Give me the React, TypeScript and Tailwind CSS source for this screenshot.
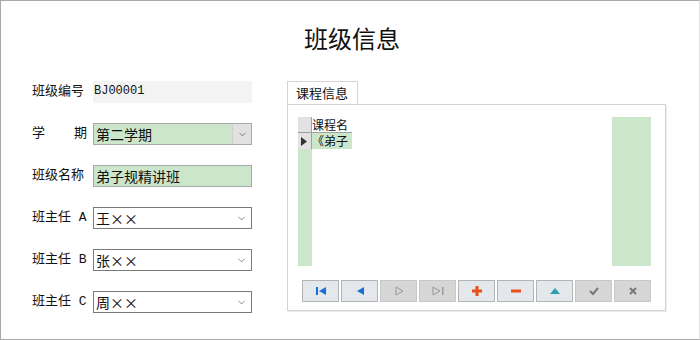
import { ChevronDown } from "lucide-react";

const cjk = { fontFamily: '"Noto Sans CJK SC", sans-serif' };
const mixed = { fontFamily: '"Liberation Mono", "Noto Sans CJK SC", monospace' };

const Label = ({ children }: { children: React.ReactNode }) => (
  <div className="w-[61px] shrink-0 text-[13px] text-[#111]" style={mixed}>
    {children}
  </div>
);

const Select = ({ value, green }: { value: string; green?: boolean }) => (
  <div
    className={`flex h-[22px] w-[159px] items-center border ${
      green ? "border-[#a8a8a8] bg-[#cce6cc]" : "border-[#7a7a7a] bg-white"
    }`}
  >
    <span className="flex-1 pl-[2px] text-[14px] leading-none text-[#111]" style={cjk}>
      {value}
    </span>
    <span
      className={`flex h-full w-[19px] items-center justify-center ${
        green ? "bg-[#e1e1e1] border-l border-[#cfcfcf]" : ""
      }`}
    >
      <ChevronDown size={11} strokeWidth={1.5} className="text-[#555]" />
    </span>
  </div>
);

const navButtons: { kind: string; disabled?: boolean }[] = [
  { kind: "first" },
  { kind: "prev" },
  { kind: "next", disabled: true },
  { kind: "last", disabled: true },
  { kind: "add" },
  { kind: "del" },
  { kind: "up" },
  { kind: "ok", disabled: true },
  { kind: "cancel", disabled: true },
];

const NavIcon = ({ kind }: { kind: string }) => {
  switch (kind) {
    case "first":
      return (
        <svg width="14" height="10" viewBox="0 0 14 10">
          <rect x="2" y="1" width="2" height="8" fill="#1a6fd6" />
          <polygon points="12,1 12,9 5,5" fill="#1a6fd6" />
        </svg>
      );
    case "prev":
      return (
        <svg width="12" height="10" viewBox="0 0 12 10">
          <polygon points="10,1 10,9 3,5" fill="#1a6fd6" />
        </svg>
      );
    case "next":
      return (
        <svg width="12" height="10" viewBox="0 0 12 10">
          <polygon points="3,1 3,9 10,5" fill="none" stroke="#999" strokeWidth="1" />
        </svg>
      );
    case "last":
      return (
        <svg width="14" height="10" viewBox="0 0 14 10">
          <polygon points="2,1 2,9 9,5" fill="none" stroke="#999" strokeWidth="1" />
          <rect x="11" y="1" width="1.5" height="8" fill="#999" />
        </svg>
      );
    case "add":
      return (
        <svg width="12" height="12" viewBox="0 0 12 12">
          <rect x="4.5" y="1" width="3" height="10" fill="#e8511a" />
          <rect x="1" y="4.5" width="10" height="3" fill="#e8511a" />
        </svg>
      );
    case "del":
      return (
        <svg width="12" height="12" viewBox="0 0 12 12">
          <rect x="1" y="4.5" width="10" height="3" fill="#e8511a" />
        </svg>
      );
    case "up":
      return (
        <svg width="12" height="10" viewBox="0 0 12 10">
          <polygon points="1,8 11,8 6,2" fill="#2a9fb0" />
        </svg>
      );
    case "ok":
      return (
        <svg width="12" height="10" viewBox="0 0 12 10">
          <polyline points="2,5 5,8 10,2" fill="none" stroke="#777" strokeWidth="2" />
        </svg>
      );
    default:
      return (
        <svg width="10" height="10" viewBox="0 0 10 10">
          <path d="M2 2 L8 8 M8 2 L2 8" stroke="#777" strokeWidth="2" />
        </svg>
      );
  }
};

export default function App() {
  return (
    <div className="h-[340px] w-[700px] border border-[#a8a8a8] border-r-[#e0e0e0] bg-white">
      <h1
        className="pt-[21px] pl-[4px] text-center text-[24px] leading-[32px] text-[#111]"
        style={cjk}
      >
        班级信息
      </h1>

      <div className="mt-[27px] flex">
        {/* form */}
        <div className="ml-[31px] flex flex-col gap-[20px]">
          <div className="flex h-[22px] items-center">
            <Label>班级编号</Label>
            <div className="flex h-[22px] w-[159px] items-start bg-[#f3f3f3]">
              <span className="pl-[1px] pt-[1px] text-[12px] text-[#111]" style={mixed}>
                BJ00001
              </span>
            </div>
          </div>
          <div className="flex h-[22px] items-center">
            <Label>
              <div className="flex w-[55px] justify-between">
                <span>学</span>
                <span>期</span>
              </div>
            </Label>
            <Select value="第二学期" green />
          </div>
          <div className="flex h-[22px] items-center">
            <Label>班级名称</Label>
            <div className="flex h-[22px] w-[159px] items-center border border-[#a8a8a8] bg-[#cce6cc]">
              <span className="pl-[2px] text-[14px] leading-none text-[#111]" style={cjk}>
                弟子规精讲班
              </span>
            </div>
          </div>
          <div className="flex h-[22px] items-center">
            <Label>班主任 A</Label>
            <Select value="王××" />
          </div>
          <div className="flex h-[22px] items-center">
            <Label>班主任 B</Label>
            <Select value="张××" />
          </div>
          <div className="flex h-[22px] items-center">
            <Label>班主任 C</Label>
            <Select value="周××" />
          </div>
        </div>

        {/* tab panel */}
        <div className="ml-[35px] flex flex-col">
          <div className="flex h-[23px] w-[71px] items-center border border-b-0 border-[#d4d4d4] bg-white pl-[8px]">
            <span className="text-[13px] text-[#111]" style={cjk}>
              课程信息
            </span>
          </div>
          <div className="h-[207px] w-[379px] border border-[#d4d4d4] shadow-[1px_1px_0_#ececec]">
            <div className="ml-[10px] mt-[12px] flex h-[149px] w-[353px]">
              <div className="flex w-[14px] flex-col">
                <div className="h-[16px] border-r border-b border-[#a0a0a0] bg-[#e2e2e2]" />
                <div className="flex h-[16px] items-center border-r border-[#a0a0a0] bg-[#e2e2e2] pl-[3px]">
                  <svg width="6" height="9" viewBox="0 0 6 9">
                    <polygon points="0,0 6,4.5 0,9" fill="#333" />
                  </svg>
                </div>
                <div className="flex-1 bg-[#cce6cc]" />
              </div>
              <div className="flex w-[40px] flex-col">
                <div className="flex h-[16px] items-center whitespace-nowrap border-b border-[#a0a0a0] bg-white text-[12px] leading-none text-[#111]" style={cjk}>
                  课程名
                </div>
                <div className="flex h-[16px] items-center whitespace-nowrap bg-[#cce6cc] text-[12px] leading-none text-[#111]" style={cjk}>
                  《弟子
                </div>
              </div>
              <div className="flex-1" />
              <div className="w-[39px] bg-[#cce6cc]" />
            </div>
            <div className="ml-[14px] mt-[14px] flex gap-[2px]">
              {navButtons.map((b) => (
                <div
                  key={b.kind}
                  className={`flex h-[22px] w-[37px] items-center justify-center border ${
                    b.disabled
                      ? "border-[#c8c8c8] bg-[#d6d6d6]"
                      : "border-[#b4b4b4] bg-[#e4e8ec]"
                  }`}
                >
                  <NavIcon kind={b.kind} />
                </div>
              ))}
            </div>
          </div>
        </div>
      </div>
    </div>
  );
}
